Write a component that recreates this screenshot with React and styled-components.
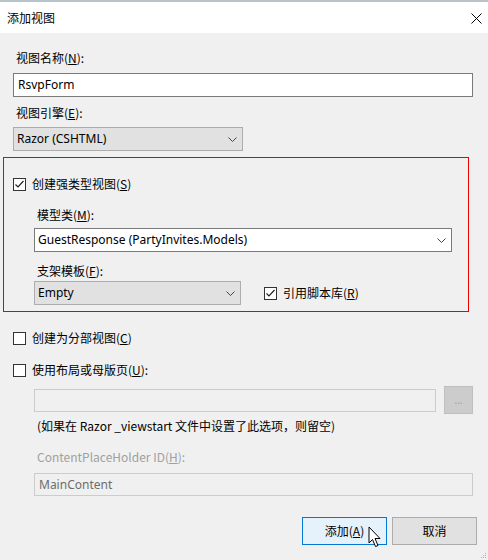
import React from 'react';
import styled, { createGlobalStyle } from 'styled-components';

const Global = createGlobalStyle`
    html, body {
        margin: 0;
        padding: 0;
        background: #f0f0f0;
    }
    body {
        font-family: 'Noto Sans', 'Noto Sans CJK SC', sans-serif;
        font-size: 12px;
        color: #000;
    }
`;

const Window = styled.div`
    position: relative;
    width: 488px;
    height: 560px;
    box-sizing: border-box;
    background: #f0f0f0;
    border-top: 2px solid #b9c3cc;
    display: flex;
    flex-direction: column;
    overflow: hidden;
`;

const TitleBar = styled.div`
    height: 31px;
    background: #fff;
    display: flex;
    align-items: center;
    justify-content: space-between;
    padding: 0 4px 0 7px;
    font-family: 'Noto Sans CJK SC', sans-serif;
    font-size: 12px;
    line-height: 16px;
`;

const CloseBtn = styled.div`
    width: 16px;
    height: 16px;
    display: flex;
    align-items: center;
    justify-content: center;
    margin-top: 1px;
`;

const Body = styled.div`
    flex: 1;
    display: flex;
    flex-direction: column;
    padding: 17px 15px 0 13px;
`;

const Label = styled.div`
    font-family: 'Noto Sans CJK SC', sans-serif;
    line-height: 16px;
    padding-left: ${p => p.$pad || 3}px;
    margin-top: ${p => p.$mt || 0}px;
    color: ${p => (p.$disabled ? '#a0a0a0' : '#000')};
    white-space: nowrap;
`;

const TextBox = styled.div`
    box-sizing: border-box;
    height: ${p => p.$h || 24}px;
    margin-top: ${p => p.$mt || 0}px;
    border: 1px solid ${p => (p.$disabled ? '#cccccc' : '#7a7a7a')};
    background: ${p => (p.$disabled ? '#f0f0f0' : '#fff')};
    color: ${p => (p.$disabled ? '#6d6d6d' : '#000')};
    display: flex;
    align-items: center;
    padding-left: 4px;
    line-height: 16px;
    flex: ${p => (p.$grow ? 1 : 'none')};
`;

const Select = styled.div`
    box-sizing: border-box;
    height: 24px;
    width: ${p => (p.$w ? `${p.$w}px` : 'auto')};
    margin-top: ${p => p.$mt || 0}px;
    border: 1px solid ${p => (p.$light ? '#7a7a7a' : '#adadad')};
    background: ${p => (p.$light ? '#fff' : '#e1e1e1')};
    display: flex;
    align-items: center;
    justify-content: space-between;
    padding: 0 5px 0 3px;
    line-height: 16px;
`;

const Group = styled.div`
    box-sizing: border-box;
    width: 466px;
    margin: 6px 0 0 -10px;
    border: 1px solid #ee0000;
    padding: 18px 16px 6px 9px;
    display: flex;
    flex-direction: column;
`;

const Indent = styled.div`
    display: flex;
    flex-direction: column;
    padding-left: ${p => p.$pad || 21}px;
`;

const Row = styled.div`
    display: flex;
    align-items: center;
    gap: ${p => p.$gap || 0}px;
    margin-top: ${p => p.$mt || 0}px;
`;

const Check = styled.label`
    display: flex;
    align-items: center;
    gap: 6px;
    margin-top: ${p => p.$mt || 0}px;
    font-family: 'Noto Sans CJK SC', sans-serif;
    line-height: 16px;
`;

const Box = styled.span`
    box-sizing: border-box;
    width: 13px;
    height: 13px;
    border: 1px solid #333;
    background: #fff;
    display: flex;
    align-items: center;
    justify-content: center;
`;

const BrowseBtn = styled.div`
    box-sizing: border-box;
    width: 29px;
    height: 28px;
    margin-left: 8px;
    background: #cccccc;
    border: 1px solid #bfbfbf;
    color: #a0a0a0;
    display: flex;
    align-items: center;
    justify-content: center;
    font-size: 10px;
`;

const Footer = styled.div`
    display: flex;
    justify-content: flex-end;
    gap: 5px;
    margin-top: 21px;
    margin-right: -4px;
`;

const Button = styled.div`
    box-sizing: border-box;
    width: 85px;
    height: 28px;
    border: 1px solid ${p => (p.$primary ? '#0078d7' : '#adadad')};
    background: ${p => (p.$primary ? '#e5f1fb' : '#e1e1e1')};
    display: flex;
    align-items: center;
    justify-content: center;
    font-family: 'Noto Sans CJK SC', sans-serif;
    line-height: 16px;
`;

const Cursor = styled.svg`
    position: absolute;
    left: 368px;
    top: 524px;
`;

const Grip = styled.svg`
    position: absolute;
    right: 1px;
    bottom: 1px;
`;

const Chevron = () => (
    <svg width="9" height="5" viewBox="0 0 9 5">
        <polyline points="0.5,0.5 4.5,4.5 8.5,0.5" fill="none" stroke="#444" strokeWidth="1" />
    </svg>
);

const CheckBox = ({ checked }) => (
    <Box>
        {checked && (
            <svg width="11" height="11" viewBox="0 0 11 11">
                <polyline points="1.5,5.5 4,8 9.5,2" fill="none" stroke="#222" strokeWidth="1.2" />
            </svg>
        )}
    </Box>
);

function App() {
    return (
        <Window>
            <Global />
            <TitleBar>
                <span>添加视图</span>
                <CloseBtn>
                    <svg width="11" height="11" viewBox="0 0 11 11">
                        <path d="M0.5 0.5 L10.5 10.5 M10.5 0.5 L0.5 10.5" stroke="#000" strokeWidth="1" />
                    </svg>
                </CloseBtn>
            </TitleBar>

            <Body>
                <Label>
                    视图名称(<u>N</u>):
                </Label>
                <TextBox $mt={7}>RsvpForm</TextBox>

                <Label $mt={8}>
                    视图引擎(<u>E</u>):
                </Label>
                <Select $w={230} $mt={6}>
                    <span>Razor (CSHTML)</span>
                    <Chevron />
                </Select>

                <Group>
                    <Check>
                        <CheckBox checked />
                        <span>
                            创建强类型视图(<u>S</u>)
                        </span>
                    </Check>
                    <Indent>
                        <Label $mt={15}>
                            模型类(<u>M</u>):
                        </Label>
                        <Select $light $mt={5}>
                            <span>GuestResponse (PartyInvites.Models)</span>
                            <Chevron />
                        </Select>
                        <Label $mt={11}>
                            支架模板(<u>F</u>):
                        </Label>
                        <Row $mt={2}>
                            <Select $w={207}>
                                <span>Empty</span>
                                <Chevron />
                            </Select>
                            <Check style={{ marginLeft: 23 }}>
                                <CheckBox checked />
                                <span>
                                    引用脚本库(<u>R</u>)
                                </span>
                            </Check>
                        </Row>
                    </Indent>
                </Group>

                <Check $mt={18}>
                    <CheckBox />
                    <span>
                        创建为分部视图(<u>C</u>)
                    </span>
                </Check>
                <Check $mt={16}>
                    <CheckBox />
                    <span>
                        使用布局或母版页(<u>U</u>):
                    </span>
                </Check>

                <Indent>
                    <Row $mt={8}>
                        <TextBox $grow $disabled $h={23} />
                        <BrowseBtn>...</BrowseBtn>
                    </Row>
                    <Label $mt={4}>(如果在 Razor _viewstart 文件中设置了此选项，则留空)</Label>
                    <Label $mt={15} $disabled>
                        ContentPlaceHolder ID(<u>H</u>):
                    </Label>
                    <TextBox $mt={8} $disabled $h={23}>
                        MainContent
                    </TextBox>
                </Indent>

                <Footer>
                    <Button $primary>
                        添加(<u>A</u>)
                    </Button>
                    <Button>取消</Button>
                </Footer>
            </Body>

            <Cursor width="14" height="22" viewBox="0 0 14 22">
                <path
                    d="M1 1 L1 17 L4.5 13.5 L7.5 20.5 L10 19.5 L7 12.5 L12 12.5 Z"
                    fill="#fff"
                    stroke="#000"
                    strokeWidth="1"
                    strokeLinejoin="miter"
                />
            </Cursor>
            <Grip width="6" height="6" viewBox="0 0 6 6">
                <rect x="4" y="0" width="1" height="1" fill="#b0b0b0" />
                <rect x="2" y="2" width="1" height="1" fill="#b0b0b0" />
                <rect x="4" y="2" width="1" height="1" fill="#b0b0b0" />
                <rect x="0" y="4" width="1" height="1" fill="#b0b0b0" />
                <rect x="2" y="4" width="1" height="1" fill="#b0b0b0" />
                <rect x="4" y="4" width="1" height="1" fill="#b0b0b0" />
            </Grip>
        </Window>
    );
}

export default App;
